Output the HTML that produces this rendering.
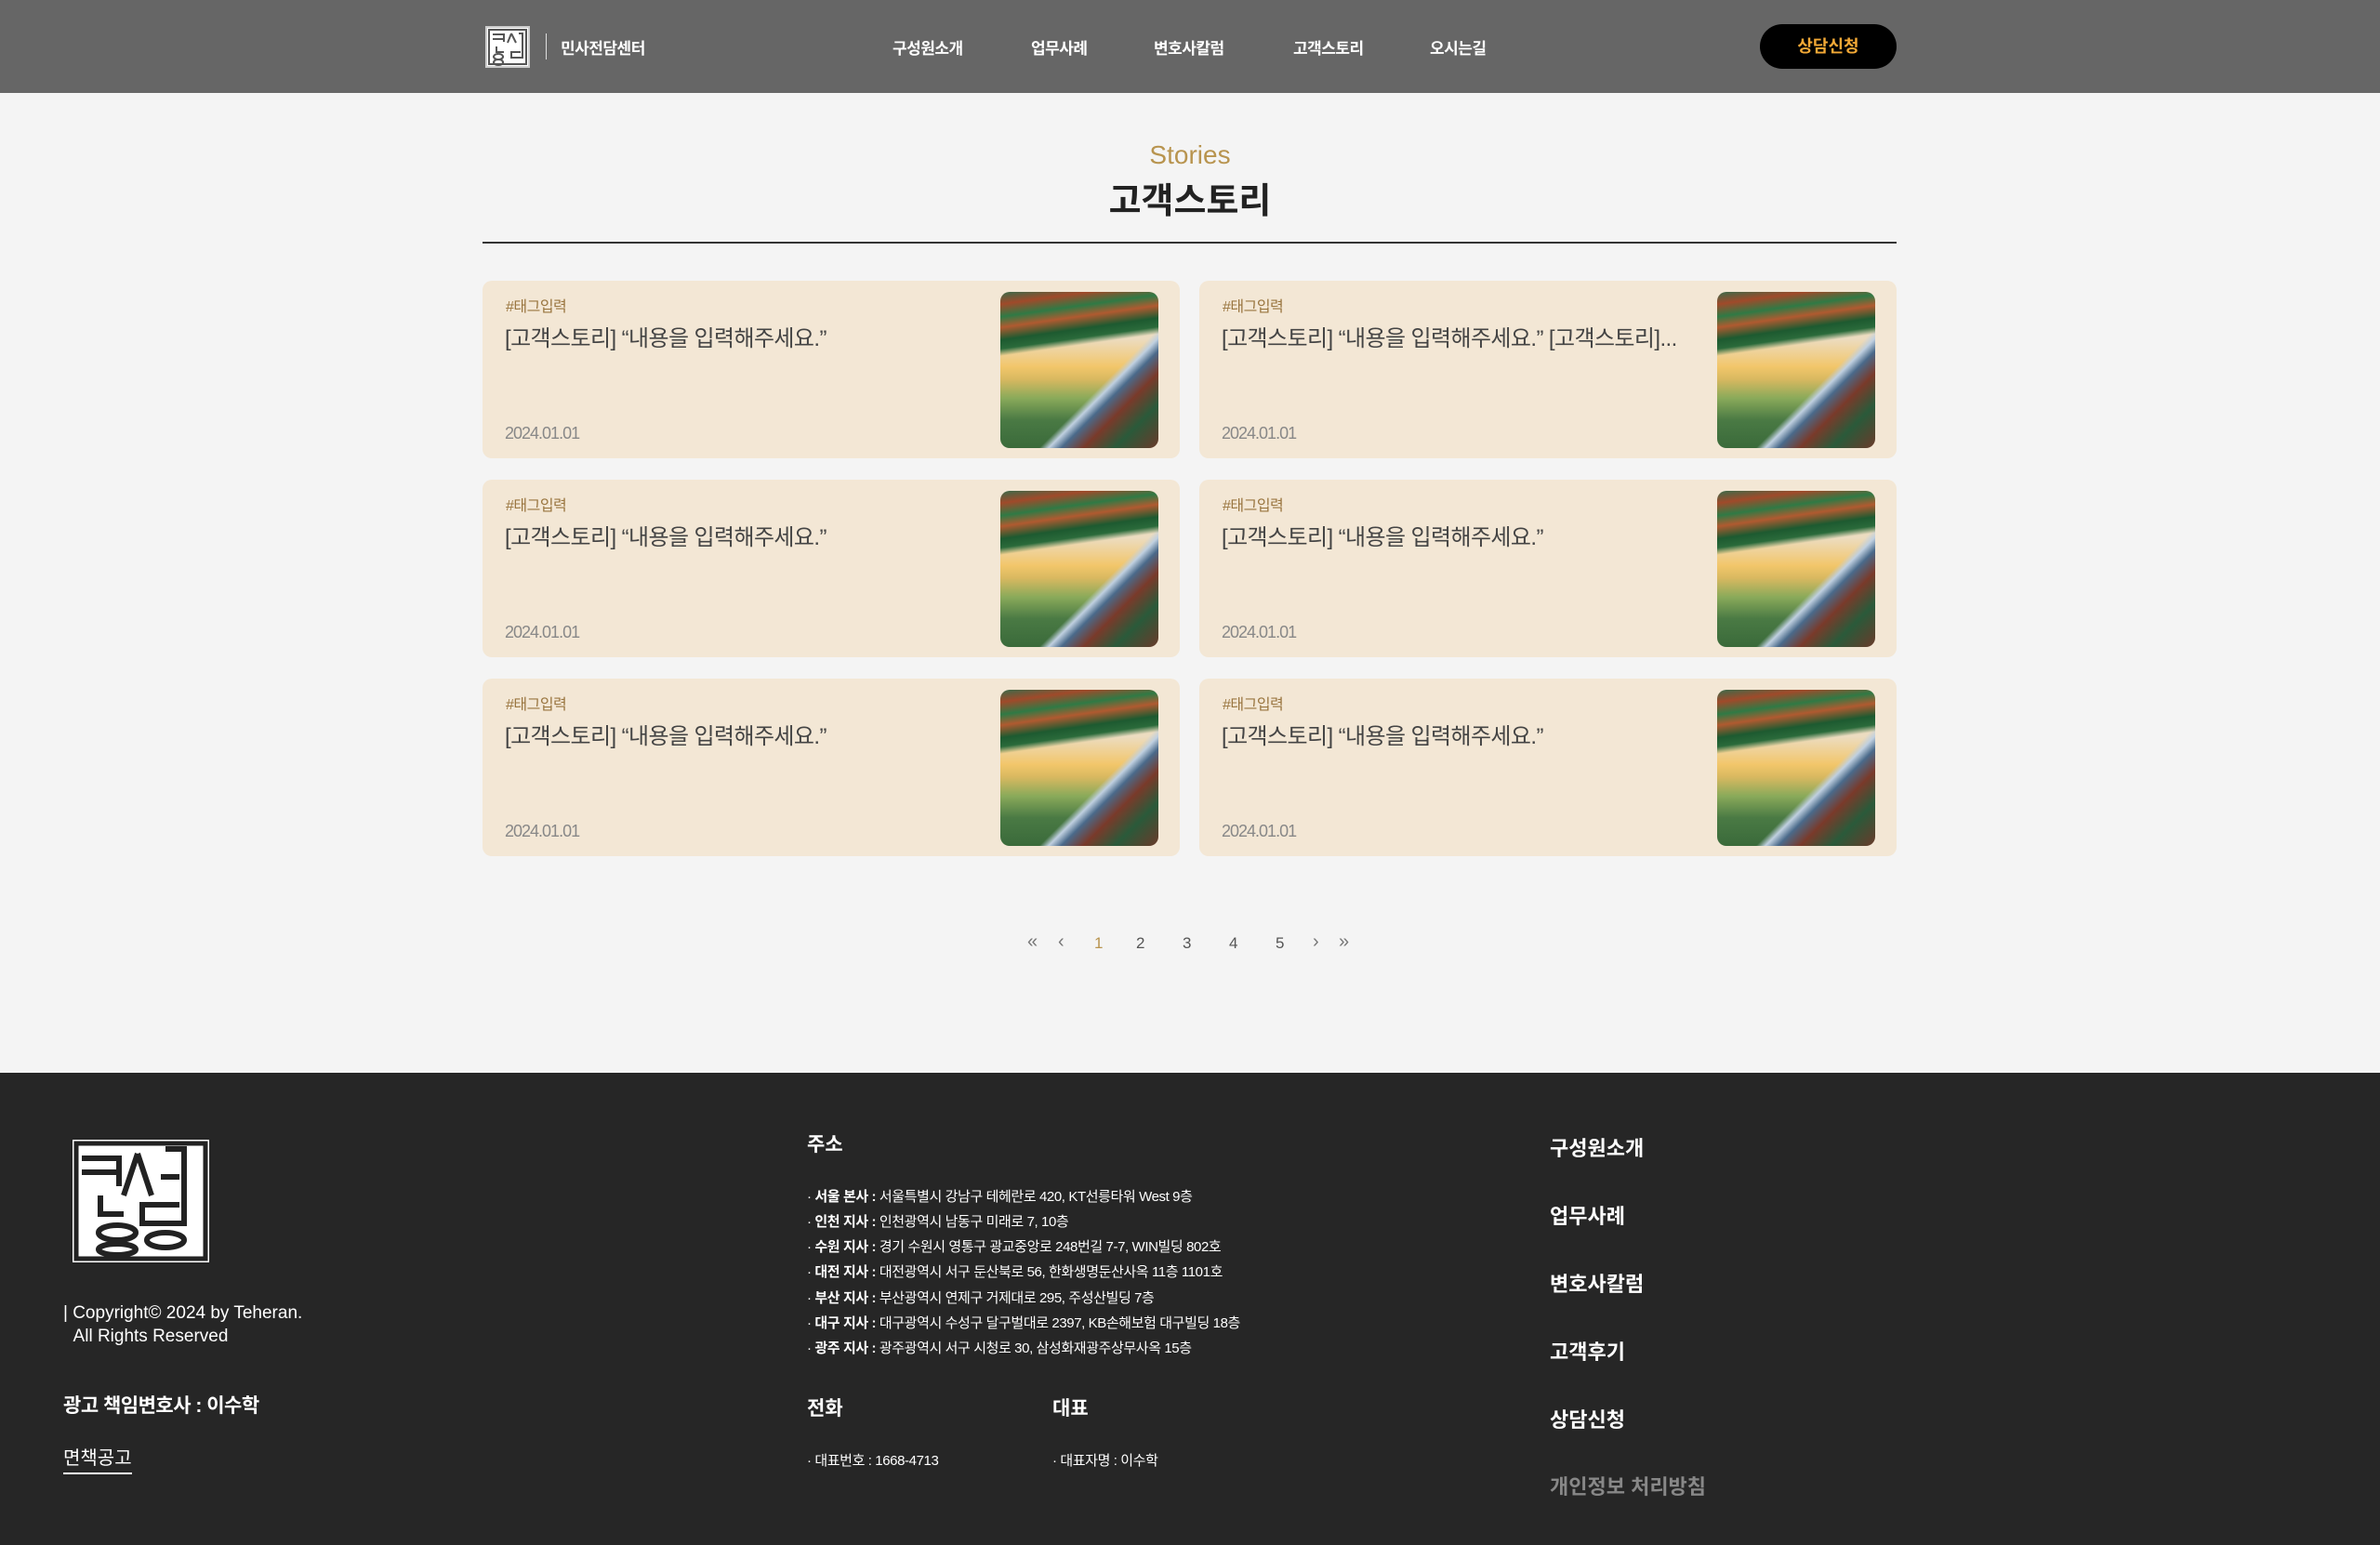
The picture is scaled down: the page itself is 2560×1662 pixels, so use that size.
<!DOCTYPE html>
<html><head><meta charset="utf-8"><style>
*{margin:0;padding:0;box-sizing:border-box}
body{width:2560px;height:1662px;background:#f4f4f4;font-family:"Liberation Sans","Noto Sans CJK KR",sans-serif;position:relative;overflow:hidden}
.a{position:absolute;white-space:nowrap}
header{position:absolute;left:0;top:0;width:2560px;height:100px;background:#666}
.nav{color:#fff;font-weight:bold;font-size:17px;top:38px;letter-spacing:-0.5px}
.card{position:absolute;width:750px;height:191px;background:#f3e7d5;border-radius:10px}
.card .tag{position:absolute;left:25px;top:14px;font-size:16px;color:#9a7640;letter-spacing:-0.5px}
.card .t{position:absolute;left:24px;top:42px;font-size:24px;color:#444;letter-spacing:-0.6px}
.card .d{position:absolute;left:24px;top:154px;font-size:18px;color:#888;letter-spacing:-1px}
.card .img{position:absolute;left:557px;top:12px;width:170px;height:168px;border-radius:10px;overflow:hidden;
background:
linear-gradient(172deg,#3a6a4a 0%,#a04a2a 7%,#2f7a45 14%,#b05a30 20%,#1d5a30 27%,#2a6a3a 32%,transparent 36%),
linear-gradient(135deg,transparent 62%,#c0d0e0 65%,#4a6a8a 69%,#7a3a2a 76%,#2a5a3a 86%,#6a3a2a 100%),
linear-gradient(180deg,#ecdcc0 30%,#f2c66a 48%,#d8b860 56%,#8aaa5a 68%,#4a7a44 82%,#3a6a3a 100%)}
.pg{top:1002px;font-size:17px;color:#555}
footer{position:absolute;left:0;top:1154px;width:2560px;height:508px;background:#262626}
.fw{color:#fff}
.addr{font-size:15px;color:#fff;left:868px;letter-spacing:-0.4px}
.addr b{font-weight:bold}
.rl{left:1667px;font-size:22px;font-weight:bold;color:#fff}
</style></head><body>
<header>
<svg class="a" style="left:522px;top:28px" width="48" height="45" viewBox="0 0 48 45"><rect x="1" y="1" width="46" height="43" fill="#fff" stroke="#ccc" stroke-width="2"/><rect x="4" y="4" width="40" height="37" fill="none" stroke="#555" stroke-width="2"/><path d="M8 9h12v8M8 14h12M12 22v6h8M28 8l-4 10M28 8l5 10M36 8h4v26h-12v-6h10M14 30a5 3 0 1 0 .1 0M14 36a5 3 0 1 0 .1 0" stroke="#555" stroke-width="2" fill="none"/></svg>
<div class="a" style="left:587px;top:36px;width:1px;height:28px;background:#ddd"></div>
<div class="a nav" style="left:603px">민사전담센터</div>
<div class="a nav" style="left:960px">구성원소개</div>
<div class="a nav" style="left:1109px">업무사례</div>
<div class="a nav" style="left:1241px">변호사칼럼</div>
<div class="a nav" style="left:1391px">고객스토리</div>
<div class="a nav" style="left:1538px">오시는길</div>
<div class="a" style="left:1893px;top:26px;width:147px;height:48px;background:#000;border-radius:24px;color:#f3a936;font-weight:bold;font-size:18px;text-align:center;line-height:48px">상담신청</div>
</header>
<div class="a" style="left:0;width:2560px;top:151px;text-align:center;font-size:28px;color:#b8944f">Stories</div>
<div class="a" style="left:0;width:2560px;top:185px;text-align:center;font-size:38px;font-weight:bold;color:#222">고객스토리</div>
<div class="a" style="left:519px;top:260px;width:1521px;height:2px;background:#333"></div>

<div class="card" style="left:519px;top:302px"><div class="tag">#태그입력</div><div class="t">[고객스토리] “내용을 입력해주세요.”</div><div class="d">2024.01.01</div><div class="img"></div></div>
<div class="card" style="left:1290px;top:302px"><div class="tag">#태그입력</div><div class="t">[고객스토리] “내용을 입력해주세요.” [고객스토리]...</div><div class="d">2024.01.01</div><div class="img"></div></div>
<div class="card" style="left:519px;top:516px"><div class="tag">#태그입력</div><div class="t">[고객스토리] “내용을 입력해주세요.”</div><div class="d">2024.01.01</div><div class="img"></div></div>
<div class="card" style="left:1290px;top:516px"><div class="tag">#태그입력</div><div class="t">[고객스토리] “내용을 입력해주세요.”</div><div class="d">2024.01.01</div><div class="img"></div></div>
<div class="card" style="left:519px;top:730px"><div class="tag">#태그입력</div><div class="t">[고객스토리] “내용을 입력해주세요.”</div><div class="d">2024.01.01</div><div class="img"></div></div>
<div class="card" style="left:1290px;top:730px"><div class="tag">#태그입력</div><div class="t">[고객스토리] “내용을 입력해주세요.”</div><div class="d">2024.01.01</div><div class="img"></div></div>

<div class="a pg" style="left:1105px;color:#777;font-size:20px;top:1002px">«</div>
<div class="a pg" style="left:1138px;color:#777;font-size:20px;top:1002px">‹</div>
<div class="a pg" style="left:1177px;color:#b8944f;top:1005px">1</div>
<div class="a pg" style="left:1222px;top:1005px">2</div>
<div class="a pg" style="left:1272px;top:1005px">3</div>
<div class="a pg" style="left:1322px;top:1005px">4</div>
<div class="a pg" style="left:1372px;top:1005px">5</div>
<div class="a pg" style="left:1412px;color:#777;font-size:20px;top:1002px">›</div>
<div class="a pg" style="left:1440px;color:#777;font-size:20px;top:1002px">»</div>

<footer></footer>
<svg class="a" style="left:78px;top:1226px" width="147" height="132" viewBox="0 0 147 132"><rect x="0" y="0" width="147" height="132" fill="#fff"/><rect x="4" y="4" width="139" height="124" fill="none" stroke="#222" stroke-width="5"/><g stroke="#222" stroke-width="6" fill="none"><path d="M10 20h40v30M10 35h40M30 60v20h25M70 15l-15 45M70 15l15 45M100 10h20v80H75V70h40M95 40h20"/><ellipse cx="48" cy="100" rx="20" ry="8"/><ellipse cx="48" cy="118" rx="20" ry="6"/><ellipse cx="100" cy="108" rx="20" ry="8"/></g></svg>
<div class="a fw" style="left:68px;top:1400px;font-size:19px;line-height:25px">| Copyright© 2024 by Teheran.<br>&nbsp;&nbsp;All Rights Reserved</div>
<div class="a fw" style="left:68px;top:1496px;font-size:21px;font-weight:bold;letter-spacing:-0.5px">광고 책임변호사 : 이수학</div>
<div class="a fw" style="left:68px;top:1552px;font-size:20px;border-bottom:2px solid #fff;padding-bottom:3px">면책공고</div>
<div class="a fw" style="left:868px;top:1215px;font-size:21px;font-weight:bold">주소</div>
<div class="a addr" style="top:1276px">· <b>서울 본사 :</b> 서울특별시 강남구 테헤란로 420, KT선릉타워 West 9층</div>
<div class="a addr" style="top:1303px">· <b>인천 지사 :</b> 인천광역시 남동구 미래로 7, 10층</div>
<div class="a addr" style="top:1330px">· <b>수원 지사 :</b> 경기 수원시 영통구 광교중앙로 248번길 7-7, WIN빌딩 802호</div>
<div class="a addr" style="top:1357px">· <b>대전 지사 :</b> 대전광역시 서구 둔산북로 56, 한화생명둔산사옥 11층 1101호</div>
<div class="a addr" style="top:1385px">· <b>부산 지사 :</b> 부산광역시 연제구 거제대로 295, 주성산빌딩 7층</div>
<div class="a addr" style="top:1412px">· <b>대구 지사 :</b> 대구광역시 수성구 달구벌대로 2397, KB손해보험 대구빌딩 18층</div>
<div class="a addr" style="top:1439px">· <b>광주 지사 :</b> 광주광역시 서구 시청로 30, 삼성화재광주상무사옥 15층</div>
<div class="a fw" style="left:868px;top:1499px;font-size:21px;font-weight:bold">전화</div>
<div class="a fw" style="left:1132px;top:1499px;font-size:21px;font-weight:bold">대표</div>
<div class="a addr" style="top:1560px">· 대표번호 : 1668-4713</div>
<div class="a addr" style="left:1132px;top:1560px">· 대표자명 : 이수학</div>
<div class="a rl" style="top:1218px">구성원소개</div>
<div class="a rl" style="top:1291px">업무사례</div>
<div class="a rl" style="top:1364px">변호사칼럼</div>
<div class="a rl" style="top:1437px">고객후기</div>
<div class="a rl" style="top:1510px">상담신청</div>
<div class="a rl" style="top:1582px;color:#888">개인정보 처리방침</div>
</body></html>
